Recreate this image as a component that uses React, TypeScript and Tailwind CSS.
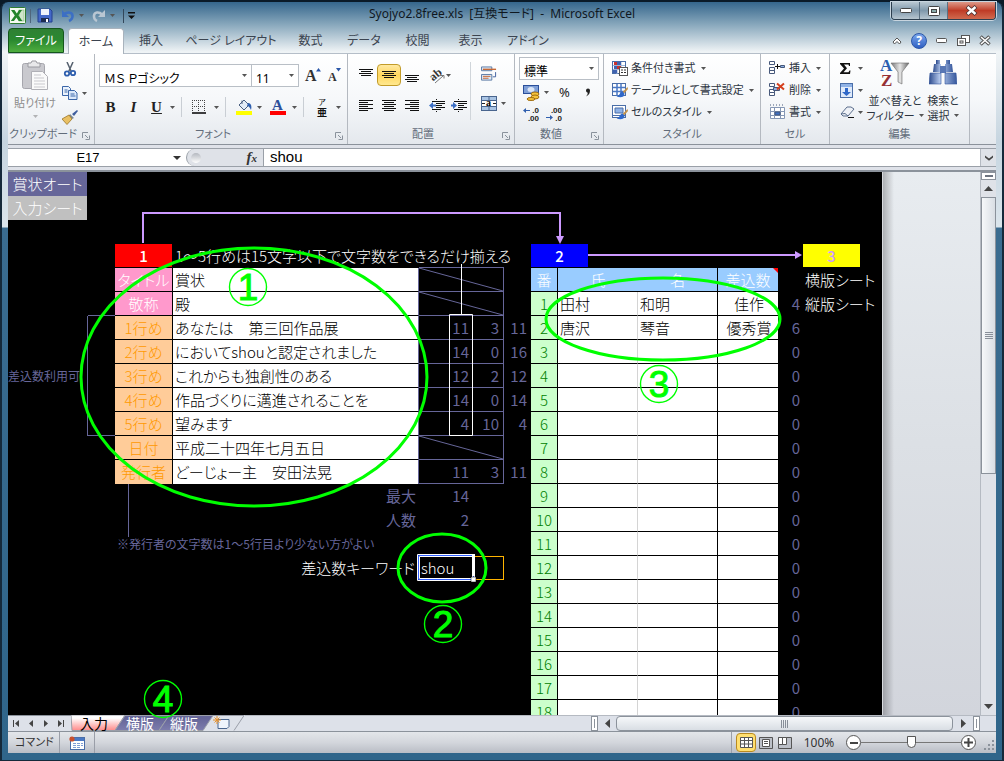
import type { ReactNode } from 'react'
import clsx from 'clsx'

/* ---------- small shared parts ---------- */

function Caret({ className }: { className?: string }) {
  return (
    <svg width="5" height="3" viewBox="0 0 5 3" className={clsx('shrink-0', className)} aria-hidden="true">
      <path d="M0 0h5L2.5 3z" fill="#555" />
    </svg>
  )
}

function IconButton({ label, className, children }: { label: string; className?: string; children: ReactNode }) {
  return (
    <button type="button" aria-label={label} className={clsx('flex shrink-0 items-center justify-center', className)}>
      {children}
    </button>
  )
}

function Group({ label, className, launcher, children }: { label: string; className: string; launcher?: boolean; children: ReactNode }) {
  return (
    <section aria-label={label} className={clsx('relative flex shrink-0 flex-col border-r border-[#b4b9c0]', className)}>
      <div className="h-[72px]">{children}</div>
      <h2 className={clsx('text-center text-[11px] leading-4 whitespace-nowrap text-[#626c7a]', launcher && 'pr-4')}>{label}</h2>
      {launcher && (
        <button type="button" aria-label={`${label}の設定`} className="absolute right-1 bottom-1">
          <svg width="8" height="8" viewBox="0 0 8 8" fill="none" stroke="#8a929c">
            <path d="M.5 6V.5H6M3 3l3 3M7.500 3.500v4h-4" />
          </svg>
        </button>
      )}
    </section>
  )
}

function Lines({ widths, className }: { widths: number[]; className?: string }) {
  const right = className === 'right'
  const center = className === 'center'
  return (
    <svg width="14" height={widths.length * 2} viewBox={`0 0 14 ${widths.length * 2}`} aria-hidden="true">
      {widths.map((w, i) => (
        <rect key={i} x={right ? 14 - w : center ? (14 - w) / 2 : 0} y={i * 2} width={w} height="1" fill="#111" />
      ))}
    </svg>
  )
}

/* ---------- title bar ---------- */

function TitleBar() {
  return (
    <header className="flex h-[26px] shrink-0 items-start">
      <div className="flex w-[300px] items-center pt-[5px] pl-px">
        <svg width="17" height="17" viewBox="0 0 17 17" aria-hidden="true">
          <rect x=".5" y=".5" width="16" height="16" rx="1" fill="#f4faf2" stroke="#2e7d32" />
          <rect x="10" y="3" width="5" height="11" fill="#cfe6cb" stroke="#7fb27a" strokeWidth=".6" />
          <path d="M2 3h3.500l2.300 3.400L10 3h3L9.500 8.300l3.800 5.700H9.700L7.400 10.500 5 14H1.800l4-5.600z" fill="#23842b" />
        </svg>
        <span className="mx-1 h-[14px] w-px bg-[#50667c]" />
        <IconButton label="上書き保存" className="ml-0.5">
          <svg width="16" height="15" viewBox="0 0 16 15">
            <path d="M1 1h12l2 2v11H1z" fill="#4368c8" stroke="#25418f" />
            <path d="M4 1h8v6H4z" fill="#eef3fb" />
            <path d="M4 10h8v4H4z" fill="#1b2b50" />
            <path d="M9 11h2v3H9z" fill="#fff" />
          </svg>
        </IconButton>
        <IconButton label="元に戻す" className="ml-2">
          <svg width="14" height="14" viewBox="0 0 14 14" fill="none">
            <path d="M3 5.500c3-3 8-2.500 8.500 1 .3 2.500-1.500 4.500-3.500 5.500" stroke="#3c6fc4" strokeWidth="2.600" />
            <path d="M1 1v7h7z" fill="#3c6fc4" />
          </svg>
        </IconButton>
        <Caret className="ml-1" />
        <IconButton label="やり直し" className="ml-2">
          <svg width="14" height="14" viewBox="0 0 14 14" fill="none">
            <path d="M10 5.500c-3-3-7.500-2.500-8 1C1.700 9 3 11 5 12" stroke="#b9c6d2" strokeWidth="2.600" />
            <path d="M13 1v7H6z" fill="#b9c6d2" />
          </svg>
        </IconButton>
        <Caret className="ml-1" />
        <span className="mx-1 ml-2 h-[14px] w-px bg-[#33475a]" />
        <IconButton label="クイック アクセス ツール バーのユーザー設定">
          <svg width="7" height="7" viewBox="0 0 7 7">
            <path d="M0 0h7v1.500H0zM0 3.500h7L3.500 7z" fill="#111" />
          </svg>
        </IconButton>
      </div>
      <h1 className="flex-1 pt-0.5 text-center text-xs leading-5 whitespace-pre text-[#10181f]">
        Syojyo2.8free.xls&nbsp; [互換モード]&nbsp; -&nbsp; Microsoft Excel
      </h1>
      <div className="flex w-[300px] justify-end">
        <div className="flex h-[18px] overflow-hidden rounded-b border border-t-0 border-[#2c3e4e] shadow-[0_0_0_1px_#c8d5df]">
          <IconButton label="最小化" className="w-7 border-r border-[#5b7183] bg-linear-to-b from-[#b9c8d2] via-[#7f98ab] to-[#b8c6d0]">
            <svg width="12" height="5" viewBox="0 0 12 5"><rect x=".5" y=".5" width="11" height="4" rx="1" fill="#fff" stroke="#444" /></svg>
          </IconButton>
          <IconButton label="元のサイズに戻す" className="w-7 border-r border-[#5b7183] bg-linear-to-b from-[#b9c8d2] via-[#7f98ab] to-[#b8c6d0]">
            <svg width="12" height="10" viewBox="0 0 12 10">
              <rect x=".5" y=".5" width="11" height="9" rx="1" fill="#fff" stroke="#444" />
              <rect x="3.500" y="3.500" width="5" height="3" fill="#8aa" stroke="#444" />
            </svg>
          </IconButton>
          <IconButton label="閉じる" className="w-[47px] bg-linear-to-b from-[#dd9888] via-[#bf3b26] to-[#d0694e]">
            <svg width="13" height="11" viewBox="0 0 13 11">
              <path d="M2 1.500l9 8M11 1.500l-9 8" stroke="#4a3030" strokeWidth="4" />
              <path d="M2.500 2l8 7M10.500 2l-8 7" stroke="#fff" strokeWidth="2.400" />
            </svg>
          </IconButton>
        </div>
      </div>
    </header>
  )
}

const menuTabs = [
  { name: '挿入', width: 'w-[54px]' },
  { name: 'ページ レイアウト', width: 'w-[106px]' },
  { name: '数式', width: 'w-[53px]' },
  { name: 'データ', width: 'w-[54px]' },
  { name: '校閲', width: 'w-[53px]' },
  { name: '表示', width: 'w-[53px]' },
  { name: 'アドイン', width: 'w-[62px]' },
]

function MenuTabs() {
  return (
    <nav className="flex h-[25px] shrink-0 items-stretch text-xs text-[#3b4450]">
      <button type="button" className="w-14 rounded-t border border-[#14571c] bg-linear-to-b from-[#2f8034] via-[#2a8a30] to-[#4fae3f] text-white">
        ファイル
      </button>
      <button type="button" className="z-10 -mb-px ml-1 w-14 rounded-t border border-b-0 border-[#a9b3bd] bg-white">
        ホーム
      </button>
      {menuTabs.map(tab => (
        <button key={tab.name} type="button" className={clsx('whitespace-nowrap', tab.width)}>{tab.name}</button>
      ))}
      <div className="flex flex-1 items-center justify-end">
        <IconButton label="リボンの最小化" className="w-[22px]">
          <svg width="10" height="8" viewBox="0 0 10 8"><path d="M5 1l4 4-1.500 2L5 4.500 2.500 7 1 5z" fill="#fff" stroke="#555" /></svg>
        </IconButton>
        <IconButton label="ヘルプ" className="w-[22px]">
          <span className="size-4 rounded-full border border-[#2b57a8] bg-linear-to-b from-[#7ba6ec] to-[#2f5fc2] text-xs leading-[14px] font-bold text-white">?</span>
        </IconButton>
        <IconButton label="ブックを最小化" className="w-[22px]">
          <svg width="11" height="5" viewBox="0 0 11 5"><rect x=".5" y=".5" width="10" height="4" rx="1" fill="#fff" stroke="#555" /></svg>
        </IconButton>
        <IconButton label="ブックを元のサイズに戻す" className="w-[22px]">
          <svg width="13" height="12" viewBox="0 0 13 12" fill="#fff" stroke="#555">
            <rect x="4.500" y=".5" width="8" height="7" />
            <rect x=".5" y="3.500" width="8" height="7" />
            <rect x="3" y="6" width="3" height="2" />
          </svg>
        </IconButton>
        <IconButton label="ブックを閉じる" className="w-[22px]">
          <svg width="12" height="11" viewBox="0 0 12 11">
            <path d="M1.500 1.500l9 8M10.500 1.500l-9 8" stroke="#555" strokeWidth="3.600" />
            <path d="M2 2l8 7M10 2L2 9" stroke="#fff" strokeWidth="1.600" />
          </svg>
        </IconButton>
      </div>
    </nav>
  )
}

/* ---------- ribbon ---------- */

function ClipboardGroup() {
  return (
    <Group label="クリップボード" className="w-[87px]" launcher>
      <div className="flex pt-1.5 pl-1.5">
        <button type="button" className="flex w-[42px] flex-col items-center text-[11px] leading-4 whitespace-nowrap text-[#8d8d8d]">
          <svg width="28" height="31" viewBox="0 0 28 31" aria-hidden="true">
            <rect x="1.500" y="3.500" width="22" height="25" rx="2" fill="#c9c9ce" stroke="#a6a6ad" />
            <path d="M7 3h3l1-2h4l1 2h3v4H7z" fill="#e8e8ea" stroke="#9a9aa0" />
            <path d="M10.500 11.500h11l5 5v13h-16z" fill="#fafafa" stroke="#b0b0b6" />
            <path d="M13 15h7M13 18h10M13 21h11M13 24h11M13 27h11" stroke="#c9c9ce" />
          </svg>
          <span className="mt-1">貼り付け</span>
          <Caret className="mt-1 opacity-40" />
        </button>
        <div className="flex flex-col gap-2 pt-px pl-1.5">
          <IconButton label="切り取り" className="size-4">
            <svg width="14" height="15" viewBox="0 0 14 15" fill="none">
              <path d="M4 0l4.500 10M10 0L5.500 10" stroke="#55606e" strokeWidth="1.500" />
              <circle cx="4" cy="11.500" r="2.200" stroke="#2f5fae" strokeWidth="1.800" />
              <circle cx="10" cy="11" r="2.200" stroke="#2f5fae" strokeWidth="1.800" />
            </svg>
          </IconButton>
          <div className="flex items-center gap-1">
            <IconButton label="コピー" className="size-4">
              <svg width="16" height="14" viewBox="0 0 16 14" stroke="#3b66a8">
                <path d="M.5.5h6l2 2v7h-8z" fill="#eaf2fc" />
                <path d="M6.500 4.500h6l2.500 2.500v6.500H6.500z" fill="#dce9fa" />
                <path d="M8.500 8h4M8.500 10h5M2.500 4h3M2.500 6h3" />
              </svg>
            </IconButton>
            <Caret />
          </div>
          <IconButton label="書式のコピー/貼り付け" className="size-4">
            <svg width="16" height="15" viewBox="0 0 16 15">
              <path d="M15 0l-5 4 2 2 4-5z" fill="#3f5e9e" />
              <path d="M8 4l4 4-2 1-3-3z" fill="#7b8794" />
              <path d="M7 5L0 9l5 5.500L10 9z" fill="#e9c063" stroke="#9a7526" strokeWidth=".8" />
            </svg>
          </IconButton>
        </div>
      </div>
    </Group>
  )
}

function Divider() {
  return <span className="mx-1.5 h-5 w-px shrink-0 bg-[#c9ced4]" />
}

function RibbonSelect({ label, value, className }: { label: string; value: string; className: string }) {
  return (
    <div className={clsx('relative h-[23px] border border-[#b9bfc6] bg-white', className)}>
      <select aria-label={label} className="h-full w-full appearance-none bg-transparent pb-1 pl-1 text-xs leading-4 text-black">
        <option>{value}</option>
      </select>
      <Caret className="pointer-events-none absolute top-[9px] right-1" />
    </div>
  )
}

function FontGroup() {
  return (
    <Group label="フォント" className="w-[253px]" launcher>
      <div className="flex items-center pt-2.5 pl-1">
        <RibbonSelect label="フォント名" value="ＭＳ Ｐゴシック" className="w-[153px]" />
        <RibbonSelect label="フォント サイズ" value="11" className="-ml-px w-12" />
        <IconButton label="フォント サイズの拡大" className="ml-1 h-5 w-5">
          <svg width="16" height="15" viewBox="0 0 16 15" className="overflow-visible">
            <text x="0" y="13" fontSize="16" fontWeight="bold" className="font-['Liberation_Serif',serif]" fill="#333">A</text>
            <path d="M11 3.500h5L13.500 0z" fill="#2b57a8" />
          </svg>
        </IconButton>
        <IconButton label="フォント サイズの縮小" className="ml-0.5 h-5 w-5">
          <svg width="14" height="15" viewBox="0 0 14 15" className="overflow-visible">
            <text x="0" y="13" fontSize="12" fontWeight="bold" className="font-['Liberation_Serif',serif]" fill="#333">A</text>
            <path d="M8 0h5l-2.500 3.500z" fill="#2b57a8" />
          </svg>
        </IconButton>
      </div>
      <div className="flex items-center pt-2 pl-2 font-['Liberation_Serif',serif] text-[15px] text-[#222]">
        <button type="button" aria-label="太字" className="h-6 w-[15px] font-bold">B</button>
        <button type="button" aria-label="斜体" className="ml-2 h-6 w-[15px] font-bold italic">I</button>
        <button type="button" aria-label="下線" className="ml-2 h-6 w-[15px] font-bold underline">U</button>
        <Caret className="ml-1.5" />
        <Divider />
        <IconButton label="罫線" className="ml-1">
          <svg width="14" height="14" viewBox="0 0 14 14" stroke="#444">
            <path d="M.5 0v12M6.500 0v12M12.500 0v12M0 .5h13M0 6.500h13" strokeDasharray="1 1" />
            <path d="M0 13h14" stroke="#000" strokeWidth="1.500" />
          </svg>
        </IconButton>
        <Caret className="ml-2" />
        <Divider />
        <IconButton label="塗りつぶしの色" className="ml-1">
          <svg width="17" height="16" viewBox="0 0 17 16">
            <path d="M3 6l5-5 5 5-5 5z" fill="#e3ecf7" stroke="#4a5f80" />
            <path d="M6 5V1.500" stroke="#4a5f80" />
            <path d="M12 4c3 0 4 3 3 7-1-2-2-4-4-4z" fill="#2f5fae" />
            <rect x="0" y="12" width="16" height="4" fill="#ff0" />
          </svg>
        </IconButton>
        <Caret className="ml-1" />
        <IconButton label="フォントの色" className="ml-2">
          <svg width="16" height="16" viewBox="0 0 16 16" className="overflow-visible">
            <text x="2" y="11" fontSize="15" fontWeight="bold" className="font-['Liberation_Serif',serif]" fill="#2b4f9a">A</text>
            <rect x="0" y="12" width="16" height="4" fill="#f00" />
          </svg>
        </IconButton>
        <Caret className="ml-1.5" />
        <Divider />
        <button type="button" aria-label="ふりがなの表示/非表示" className="ml-1.5 flex w-3 flex-col items-center font-['Noto_Sans_CJK_JP',sans-serif] text-[#111]">
          <span className="text-[8px] leading-[9px]">ア</span>
          <span className="text-[10px] leading-[11px] font-bold">亜</span>
        </button>
        <Caret className="ml-2" />
      </div>
    </Group>
  )
}

function AlignGroup() {
  return (
    <Group label="配置" className="w-[167px]" launcher>
      <div className="flex h-full pl-1.5">
        <div className="flex w-[116px] flex-col pt-2.5">
          <div className="flex h-[22px] items-center">
            <IconButton label="上揃え" className="h-5 w-[23px] pb-1"><Lines widths={[14, 10, 14, 10]} className="center" /></IconButton>
            <IconButton label="上下中央揃え" className="h-[22px] w-6 rounded-sm border border-[#c29b29] bg-linear-to-b from-[#ffe9a0] via-[#ffd65c] to-[#ffe88e]">
              <Lines widths={[14, 10, 14, 10]} className="center" />
            </IconButton>
            <IconButton label="下揃え" className="h-5 w-[22px] pt-2"><Lines widths={[14, 10, 14, 10]} className="center" /></IconButton>
            <IconButton label="方向" className="ml-1.5">
              <svg width="17" height="16" viewBox="0 0 17 16" className="overflow-visible">
                <text x="1" y="12" fontSize="12" fontWeight="bold" transform="rotate(-40 6 9)" className="font-['Liberation_Serif',serif]" fill="#333">ab</text>
                <path d="M6 16l8-7M11 8.500h4v3" stroke="#777" fill="none" />
              </svg>
            </IconButton>
            <Caret />
          </div>
          <div className="flex h-10 items-center">
            <IconButton label="左揃え" className="h-5 w-[23px]"><Lines widths={[14, 9, 14, 9, 14, 9]} /></IconButton>
            <IconButton label="中央揃え" className="h-5 w-6"><Lines widths={[14, 10, 14, 10, 14, 10]} className="center" /></IconButton>
            <IconButton label="右揃え" className="h-5 w-[22px]"><Lines widths={[14, 9, 14, 9, 14, 9]} className="right" /></IconButton>
            <IconButton label="インデントを減らす" className="ml-1 h-5 w-5">
              <svg width="16" height="14" viewBox="0 0 16 14" stroke="#111">
                <path d="M3 2.500h13M8 4.500h8M8 6.500h5M8 8.500h8M3 10.500h9" />
                <path d="M7.500 0v14" strokeDasharray="1 1" />
                <path d="M0 6.500L4 3v2.500h3v2H4V10z" fill="#3c6fc4" stroke="none" />
              </svg>
            </IconButton>
            <IconButton label="インデントを増やす" className="ml-0.5 h-5 w-5">
              <svg width="16" height="14" viewBox="0 0 16 14" stroke="#111">
                <path d="M3 2.500h13M8 4.500h8M8 6.500h5M8 8.500h8M3 10.500h9" />
                <path d="M7.500 0v14" strokeDasharray="1 1" />
                <path d="M6 6.500L2 3v2.500H0v2h2V10z" fill="#3c6fc4" stroke="none" />
              </svg>
            </IconButton>
          </div>
        </div>
        <span className="mt-2 h-[58px] w-px bg-[#d0d5da]" />
        <div className="flex flex-col gap-3.5 pt-3 pl-2.5">
          <IconButton label="折り返して全体を表示する" className="w-4">
            <svg width="17" height="16" viewBox="0 0 17 16" fill="none">
              <path d="M.5.500h11v4H.5zM.5 8.500h11v6H.5z" fill="#dfe9f5" stroke="#5877a3" />
              <path d="M2 3h14" stroke="#c5622d" strokeWidth="1.400" />
              <path d="M2 10.500h8M2 12.500h6" stroke="#c5622d" />
              <path d="M15.500 6v5h-3" stroke="#3f5e9e" />
            </svg>
          </IconButton>
          <div className="flex items-center gap-1">
            <IconButton label="セルを結合して中央揃え">
              <svg width="16" height="15" viewBox="0 0 16 15" className="overflow-visible">
                <rect x=".5" y=".5" width="15" height="14" fill="#a9c4e4" stroke="#49658e" />
                <path d="M0 4.500h16M0 10.500h16M8 0v4M8 11v4" stroke="#49658e" />
                <rect x="1" y="5" width="14" height="5" fill="#fff" />
                <text x="5" y="10" fontSize="10" fontWeight="bold" className="font-['Liberation_Serif',serif]">a</text>
                <path d="M1 7.500h3M12 7.500h3" stroke="#222" />
              </svg>
            </IconButton>
            <Caret />
          </div>
        </div>
      </div>
    </Group>
  )
}

function DecimalIcon({ top, bottom, right }: { top: string; bottom: string; right?: boolean }) {
  return (
    <svg width="17" height="14" viewBox="0 0 17 14" className="overflow-visible" aria-hidden="true">
      <text x="16" y="6" textAnchor="end" fontSize="8" fontWeight="bold" className="font-['Liberation_Sans',sans-serif]" fill="#222">{top}</text>
      <text x="16" y="14" textAnchor="end" fontSize="8" fontWeight="bold" className="font-['Liberation_Sans',sans-serif]" fill="#222">{bottom}</text>
      <path d={right ? 'M7 10.500L4 8v2H0v1h4v2z' : 'M0 3.500L3 1v2h4v1H3v2z'} fill="#2f5fae" />
    </svg>
  )
}

function NumberGroup() {
  return (
    <Group label="数値" className="w-[89px]" launcher>
      <div className="pt-[3px] pl-1">
        <RibbonSelect label="表示形式" value="標準" className="w-20" />
        <div className="flex h-[25px] items-center pl-1">
          <IconButton label="通貨表示形式">
            <svg width="17" height="16" viewBox="0 0 17 16">
              <rect x=".5" y=".5" width="15" height="8" fill="#7f9fd6" stroke="#2b4f9a" />
              <ellipse cx="8" cy="4.500" rx="3.500" ry="2.500" fill="#dbe6f7" />
              <ellipse cx="12" cy="9" rx="4" ry="2" fill="#f5c33b" stroke="#a06d12" />
              <ellipse cx="12" cy="12" rx="4" ry="2" fill="#f5c33b" stroke="#a06d12" />
              <ellipse cx="8" cy="14" rx="4" ry="1.500" fill="#f5c33b" stroke="#a06d12" />
            </svg>
          </IconButton>
          <Caret className="ml-1" />
          <button type="button" aria-label="パーセント スタイル" className="ml-2.5 text-[13px] text-[#222]">%</button>
          <IconButton label="桁区切りスタイル" className="ml-3.5 w-2">
            <svg width="6" height="9" viewBox="0 0 6 9"><path d="M1 2.500a2 2 0 1 1 4 0C5 5 4 7 1 8.500 2.500 6.500 3 5.500 2.500 4.500 1.500 4.300 1 3.500 1 2.500z" fill="#222" /></svg>
          </IconButton>
        </div>
        <div className="flex items-center gap-1.5 pt-0.5 pl-1">
          <IconButton label="小数点以下の表示桁数を増やす"><DecimalIcon top=".0" bottom=".00" /></IconButton>
          <IconButton label="小数点以下の表示桁数を減らす"><DecimalIcon top=".00" bottom=".0" right /></IconButton>
        </div>
      </div>
    </Group>
  )
}

function StyleIcon({ kind }: { kind: 'condition' | 'table' | 'cell' }) {
  return (
    <svg width="16" height="16" viewBox="0 0 16 16" className="shrink-0" aria-hidden="true">
      <rect x=".5" y="1.500" width="13" height="12" fill="#fff" stroke="#4a6ea8" />
      {kind === 'condition' && (
        <>
          <path d="M5 2v12M9 2v12M1 5.500h12M1 9.500h12" stroke="#9db4d6" />
          <path d="M2 2h3v3H2zM5 6h4v3H5z" fill="#c9302c" />
          <path d="M2 6h3v3H2zM5 2h4v3H5zM1 10h4v3H1z" fill="#3f62b0" />
          <rect x="7.500" y="7.500" width="8" height="8" fill="#fff" stroke="#555" />
          <path d="M9 10h2M12 10h2M9 12.500h2M12 12.500h2" stroke="#333" />
        </>
      )}
      {kind === 'table' && <path d="M5 2v12M9 2v12M1 5.500h12M1 9.500h12" stroke="#4a78c4" strokeWidth="1.500" />}
      {kind === 'cell' && <path d="M3 4h8v5H3zM1 11.500h12" fill="#8fb2e6" stroke="#4a6ea8" />}
      {kind !== 'condition' && (
        <>
          <path d="M15.500 5l-5 5 1.500 1.500L16 7z" fill="#c2924a" />
          <path d="M10.500 9.500c-3 .5-2 4-6 5 4 1.500 8 1 8-3z" fill="#2f68c9" />
        </>
      )}
    </svg>
  )
}

function CellIcon({ kind }: { kind: 'insert' | 'delete' | 'format' }) {
  return (
    <svg width="17" height="16" viewBox="0 0 17 16" fill="#fff" stroke="#46587a" className="shrink-0" aria-hidden="true">
      {kind !== 'format' && <path d="M.5 1.500h5v3h-5zM.5 7.500h5v3h-5zM.5 10.500h5v3h-5z" />}
      {kind === 'insert' && (
        <>
          <path d="M6 6.500h5M8.500 4v5" stroke="#111" />
          <path d="M11.500 5.500h4v2h-4z" fill="#8fb2e6" />
        </>
      )}
      {kind === 'delete' && (
        <>
          <path d="M4.500 5.500h6v3h-6z" fill="#8fb2e6" />
          <path d="M8 1.500l7 6M15 1.500l-7 6" stroke="#d5401f" strokeWidth="2" />
        </>
      )}
      {kind === 'format' && (
        <>
          <path d="M1.500 3.500h14v11h-14zM1.500 7.500h14M1.500 11.500h14M5.500 3.500v11M11.500 3.500v11" stroke="#8597b5" />
          <path d="M6 8h5v3H6z" fill="#3c6fc4" />
          <path d="M1 1h15" strokeDasharray="1 2" />
        </>
      )}
    </svg>
  )
}

function TextCommand({ icon, label }: { icon: ReactNode; label: string }) {
  return (
    <button type="button" className="flex h-[22px] items-center gap-[3px] text-[11px] whitespace-nowrap text-[#2c3440]">
      {icon}
      <span>{label}</span>
      <Caret className="ml-0.5" />
    </button>
  )
}

function EditGroup() {
  return (
    <Group label="編集" className="w-[140px]">
      <div className="flex pt-[3px] pl-2.5">
        <div className="flex w-7 flex-col">
          <button type="button" aria-label="オート SUM" className="flex h-[22px] items-center gap-1.5">
            <svg width="11" height="11" viewBox="0 0 11 11"><path d="M0 0h10v3H9L8.500 1.500H4L7 5.300 3.500 9.300h5L9.500 7.500H10.500L10 11H0V10L4 5.600 0 1z" fill="#111" /></svg>
            <Caret className="ml-px" />
          </button>
          <button type="button" aria-label="フィル" className="flex h-[22px] items-center gap-[5px]">
            <svg width="13" height="15" viewBox="0 0 13 15">
              <rect x=".5" y=".5" width="12" height="14" fill="#dfeafa" stroke="#4a6ea8" />
              <path d="M1 1h11v3H1z" fill="#8fb2e6" />
              <path d="M5 5h3v4h3l-4.500 4L2 9h3z" fill="#2f68c9" />
            </svg>
            <Caret />
          </button>
          <button type="button" aria-label="クリア" className="flex h-[22px] items-center gap-[3px]">
            <svg width="15" height="12" viewBox="0 0 15 12">
              <path d="M1 8l6-7h4l3 2-6 7H3z" fill="#eef1f6" stroke="#5c6f8d" />
              <path d="M1 8l4-.5 3 2.500" fill="none" stroke="#5c6f8d" />
              <path d="M8 11.500h6" stroke="#111" />
            </svg>
            <Caret />
          </button>
        </div>
        <button type="button" className="flex w-[54px] flex-col items-center text-[11px] leading-[15px] whitespace-nowrap text-[#2c3440]">
          <svg width="30" height="32" viewBox="0 0 30 32" className="overflow-visible" aria-hidden="true">
            <defs>
              <linearGradient id="funnel" x1="0" x2="1">
                <stop offset="0" stopColor="#777" />
                <stop offset=".5" stopColor="#e6e6e6" />
                <stop offset="1" stopColor="#666" />
              </linearGradient>
            </defs>
            <text x="0" y="14" fontSize="17" fontWeight="bold" className="font-['Liberation_Serif',serif]" fill="#2b5fb0">A</text>
            <text x="1" y="29" fontSize="17" fontWeight="bold" className="font-['Liberation_Serif',serif]" fill="#963034">Z</text>
            <path d="M11 6h18l-7 9v12l-4-2V15z" fill="url(#funnel)" stroke="#6b6b6b" strokeWidth=".6" />
          </svg>
          <span className="mt-1">並べ替えと</span>
          <span className="flex items-center gap-1">フィルター<Caret /></span>
        </button>
        <button type="button" className="flex w-[42px] flex-col items-center text-[11px] leading-[15px] whitespace-nowrap text-[#2c3440]">
          <svg width="28" height="32" viewBox="0 0 28 32" aria-hidden="true">
            <defs>
              <linearGradient id="lens" x1="0" x2="1">
                <stop offset="0" stopColor="#2c4a8c" />
                <stop offset=".4" stopColor="#b9cdf0" />
                <stop offset="1" stopColor="#34569c" />
              </linearGradient>
            </defs>
            <path d="M7 3h4v4H7zM17 3h4v4h-4z" fill="url(#lens)" />
            <path d="M5 7h7v8H4zM16 7h7l1 8h-8z" fill="url(#lens)" />
            <path d="M11 9h6v7h-6z" fill="#5877b5" />
            <path d="M1 16h11v11H0zM16 16h11l1 11H16z" fill="url(#lens)" stroke="#34569c" strokeWidth=".6" />
          </svg>
          <span className="mt-1">検索と</span>
          <span className="flex items-center gap-1">選択<Caret /></span>
        </button>
      </div>
    </Group>
  )
}

function Ribbon() {
  return (
    <div className="flex h-[92px] shrink-0 border-t border-b border-t-[#b5bec8] border-b-[#8b929b] bg-linear-to-b from-white via-[#f6f8fa] to-[#e4e8ed]">
      <ClipboardGroup />
      <FontGroup />
      <AlignGroup />
      <NumberGroup />
      <Group label="スタイル" className="w-[157px]">
        <div className="pt-[3px] pl-2">
          <TextCommand icon={<StyleIcon kind="condition" />} label="条件付き書式" />
          <TextCommand icon={<StyleIcon kind="table" />} label="テーブルとして書式設定" />
          <TextCommand icon={<StyleIcon kind="cell" />} label="セルのスタイル" />
        </div>
      </Group>
      <Group label="セル" className="w-[69px]">
        <div className="pt-[3px] pl-2">
          <TextCommand icon={<CellIcon kind="insert" />} label="挿入" />
          <TextCommand icon={<CellIcon kind="delete" />} label="削除" />
          <TextCommand icon={<CellIcon kind="format" />} label="書式" />
        </div>
      </Group>
      <EditGroup />
    </div>
  )
}

function FormulaBar() {
  return (
    <div className="flex h-[27px] shrink-0 border-b-2 border-[#8b929b] bg-[#dfe2e9] pt-[3px] pb-[3px]">
      <div className="flex w-full border-y border-[#9aa0a8] bg-white">
        <input aria-label="名前ボックス" defaultValue="E17" className="w-[160px] bg-white text-center font-['Liberation_Sans',sans-serif] text-[13px] text-black outline-none" />
        <button type="button" aria-label="名前の一覧" className="flex w-[18px] items-center justify-center">
          <svg width="8" height="4" viewBox="0 0 8 4"><path d="M0 0h8L4 4z" fill="#333" /></svg>
        </button>
        <div className="flex w-[77px] items-center justify-between rounded-l-full border-l border-[#9aa0a8] bg-[#dfe2e8] pr-1.5 pl-1">
          <span className="size-2.5 rounded-full bg-linear-to-b from-[#b4b8bf] to-white" />
          <button type="button" aria-label="関数の挿入" className="font-['Liberation_Serif',serif] text-[15px] leading-4 font-bold text-[#333] italic">
            f<span className="text-[11px]">x</span>
          </button>
        </div>
        <input aria-label="数式バー" defaultValue="shou" className="min-w-0 flex-1 border-l border-[#9aa0a8] bg-white pl-1.5 font-['Liberation_Sans',sans-serif] text-[15px] text-black outline-none" />
        <IconButton label="数式バーの展開" className="w-4 border-l border-[#b5bac2] bg-[#dfe2e8]">
          <svg width="8" height="6" viewBox="0 0 8 6"><path d="M0 .5l4 3 4-3v2L4 5.700 0 2.500z" fill="#444" /></svg>
        </IconButton>
      </div>
    </div>
  )
}

/* ---------- worksheet ---------- */

const columnWidths = [
  'w-20', 'w-[27px]', 'w-[58px]', 'w-[246px]', 'w-14', 'w-[29px]', 'w-[27px]',
  'w-[27px]', 'w-20', 'w-20', 'w-[60px]', 'w-[25px]', 'w-[58px]', 'w-[21px]',
]

interface LetterRow {
  label: string
  value: string
  counts?: [number, number, number]
}

const letterRows: LetterRow[] = [
  { label: 'タイトル', value: '賞状' },
  { label: '敬称', value: '殿' },
  { label: '1行め', value: 'あなたは　第三回作品展', counts: [11, 3, 11] },
  { label: '2行め', value: 'においてshouと認定されました', counts: [14, 0, 16] },
  { label: '3行め', value: 'これからも独創性のある', counts: [12, 2, 12] },
  { label: '4行め', value: '作品づくりに邁進されることを', counts: [14, 0, 14] },
  { label: '5行め', value: '望みます', counts: [4, 10, 4] },
  { label: '日付', value: '平成二十四年七月五日' },
  { label: '発行者', value: 'どーじょー主　安田法晃', counts: [11, 3, 11] },
]

const people = [
  { family: '田村', given: '和明', prize: '佳作', length: 4 },
  { family: '唐沢', given: '琴音', prize: '優秀賞', length: 6 },
]

const FIRST_ROW = 4
const ROW_COUNT = 23

function LetterCells({ row }: { row: number }) {
  const entry = letterRows[row - FIRST_ROW]
  const index = row - FIRST_ROW
  const last = index === letterRows.length - 1

  if (entry) {
    const grid = 'border-b border-[#666699] pr-1 text-right font-normal text-[#666699]'
    return (
      <>
        <td className={clsx((index === 1 || index === 6) && 'border-b border-[#666699]')} />
        <th
          scope="row"
          className={clsx(
            'border-r border-black text-center',
            !last && 'border-b',
            index < 2 ? 'bg-[#ff99cc] text-white' : 'bg-[#ffcc99] text-[#ff9900]',
          )}
        >
          {entry.label}
        </th>
        <td className={clsx('border-r border-r-[#666699] border-b-black bg-white pl-0.5 text-black', !last && 'border-b')}>{entry.value}</td>
        {entry.counts ? (
          <>
            <td className={clsx(grid, 'pr-1.5')}>{entry.counts[0]}</td>
            <td className={clsx(grid, 'border-r')}>{entry.counts[1]}</td>
            <td className="pr-1 text-right font-normal text-[#666699]">{entry.counts[2]}</td>
          </>
        ) : (
          <>
            <td colSpan={2} className="border-r border-b border-[#666699]">
              <svg viewBox="0 0 84 23" className="block h-[23px] w-full" aria-hidden="true">
                <path d="M0 0l84 23" stroke="#666699" />
              </svg>
            </td>
            <td />
          </>
        )}
      </>
    )
  }
  if (row === 3) {
    return (
      <>
        <td />
        <td className="border-r border-b border-black bg-[#ff0000] text-center font-medium text-white">1</td>
        <td className="pl-0.5 text-white">1～5行めは15文字以下で文字数をできるだけ揃える</td>
        <td colSpan={2} className="border-b border-[#666699]" />
        <td />
      </>
    )
  }
  if (row === 13 || row === 14) {
    return (
      <>
        <td /><td />
        <td className="pr-[3px] text-right font-normal text-[#666699]">{row === 13 ? '最大' : '人数'}</td>
        <td className="pr-1.5 text-right font-normal text-[#666699]">{row === 13 ? 14 : 2}</td>
        <td /><td />
      </>
    )
  }
  if (row === 15) {
    return (
      <>
        <td />
        <td colSpan={5} className="pl-0.5 text-xs leading-[23px] font-normal text-[#666699]">※発行者の文字数は1～5行目より少ない方がよい</td>
      </>
    )
  }
  if (row === 16) {
    return (
      <>
        <td /><td />
        <td className="pr-1 text-right text-white">差込数キーワード</td>
        <td className="pl-0.5 text-white">shou</td>
        <td className="border-t border-r border-b border-[#ffb400]" />
        <td />
      </>
    )
  }
  return <td colSpan={6} />
}

function NameCells({ row }: { row: number }) {
  if (row < 3) return <td colSpan={7} />
  if (row === 3) {
    return (
      <>
        <td colSpan={5}>
          <div className="h-[23px] w-[57px] bg-[#0000ff] text-center font-medium text-white">2</div>
        </td>
        <td className="border-r border-b border-black bg-[#ffff00] text-center font-medium text-[#cc99ff]">3</td>
        <td />
      </>
    )
  }
  if (row === 4) {
    const head = 'border-b border-black bg-[#99ccff] text-center text-white'
    return (
      <>
        <th className={clsx(head, 'border-r')}>番</th>
        <th className={head}>氏</th>
        <th className={clsx(head, 'border-r')}>名</th>
        <th className={clsx(head, 'relative')}>
          差込数
          <span className="absolute top-0 right-0 size-[5px] bg-[#ff0000] [clip-path:polygon(0_0,100%_0,100%_100%)]" />
        </th>
        <td />
        <td colSpan={2} className="pl-0.5 text-white">横版シート</td>
      </>
    )
  }
  const number = row - FIRST_ROW
  const person = people[number - 1]
  const cell = 'border-b border-b-black bg-white pl-0.5 text-black'
  return (
    <>
      <th scope="row" className="border-r border-b border-black bg-[#ccffcc] text-center text-[#008000]">{number}</th>
      <td className={clsx(cell, 'border-r border-r-[#d4d4d4]')}>{person?.family}</td>
      <td className={clsx(cell, 'border-r border-r-black')}>{person?.given}</td>
      <td className={clsx(cell, 'text-center')}>{person?.prize}</td>
      <td className="pr-[3px] text-right font-normal text-[#666699]">{person?.length ?? 0}</td>
      <td colSpan={2} className="pl-0.5 text-white">{number === 1 && '縦版シート'}</td>
    </>
  )
}

function SheetTable() {
  return (
    <table className="w-[874px] table-fixed border-separate border-spacing-0 bg-black text-[15px] leading-[23px] font-light whitespace-nowrap [&_td]:h-6 [&_td]:py-0 [&_td]:align-top [&_th]:h-6 [&_th]:p-0 [&_th]:align-top [&_th]:font-light">
      <colgroup>
        {columnWidths.map((width, i) => <col key={i} className={width} />)}
      </colgroup>
      <tbody>
        {Array.from({ length: ROW_COUNT }, (_, row) => (
          <tr key={row}>
            <td
              className={clsx(
                row === 0 && 'border-r border-black bg-[#666699] text-center text-white',
                row === 1 && 'border-r border-black bg-[#c0c0c0] text-center text-white',
                row >= 6 && row <= 10 && 'border-r border-[#666699]',
                row === 8 && 'text-xs leading-[23px] font-normal text-[#666699]',
              )}
            >
              {row === 0 && '賞状オート'}
              {row === 1 && '入力シート'}
              {row === 8 && '差込数利用可'}
            </td>
            <LetterCells row={row} />
            <NameCells row={row} />
          </tr>
        ))}
      </tbody>
    </table>
  )
}

const badges = [
  { n: 1, x: 248, y: 287 },
  { n: 2, x: 443, y: 624 },
  { n: 3, x: 659, y: 384 },
  { n: 4, x: 163, y: 699 },
]

/* arrows, rings and numbers drawn over the cells */
function Annotations() {
  return (
    <svg
      width="874"
      height="544"
      viewBox="8 172 874 544"
      fill="none"
      className="pointer-events-none absolute top-0 left-0 z-10 overflow-visible"
      aria-hidden="true"
    >
      <g stroke="#cc99ff" strokeWidth="2">
        <path d="M143 243v-30h417v24" />
        <path d="M588 255h208" />
      </g>
      <path d="M556 236h8l-4 8zM795 251v8l7-4z" fill="#cc99ff" />
      <path d="M461.500 264v50M449.500 314.500h23v121h-23z" stroke="#fff" />
      <path d="M128.500 484v53" stroke="#666699" />
      <path d="M417.500 554.500h57v26h-57z" stroke="#fff" />
      <path d="M418.500 555.500h55v24h-55z" stroke="#2f5fff" />
      <path d="M419.500 556.500h53v22h-53z" stroke="#fff" />
      <path d="M473.500 554v22" stroke="#fff" strokeWidth="3" />
      <path d="M471 577h5v5h-5z" fill="#fff" stroke="#000" strokeWidth=".5" />
      <g stroke="#00ff00" strokeWidth="3">
        <ellipse cx="254" cy="377" rx="173" ry="129" />
        <ellipse cx="442" cy="568" rx="44" ry="34" />
        <ellipse cx="663" cy="319" rx="117" ry="41" />
      </g>
      {badges.map(({ n, x, y }) => (
        <g key={n}>
          <circle cx={x} cy={y} r="18.500" stroke="#00ff00" strokeWidth="1.400" />
          <text x={x} y={y + 13} textAnchor="middle" fontSize="37" fill="#00ff00" stroke="#00ff00" className="font-['Liberation_Sans',sans-serif]">{n}</text>
        </g>
      ))}
    </svg>
  )
}

function VerticalScroll() {
  return (
    <div className="flex w-4 shrink-0 flex-col items-center border-l border-[#b5bac2] bg-[#dfe2e8]">
      <div className="flex h-2 w-full items-center justify-center border border-[#8b929b] bg-white">
        <span className="h-0.5 w-2 bg-[#6d7480]" />
      </div>
      <IconButton label="上へスクロール" className="h-[17px] w-full">
        <svg width="9" height="5" viewBox="0 0 9 5"><path d="M0 5h9L4.500 0z" fill="#444" /></svg>
      </IconButton>
      <div className="flex h-[277px] w-full flex-col items-center justify-center gap-px border border-[#8b929b] bg-linear-to-r from-[#f6f8fa] to-[#d9dee4]">
        {[0, 1, 2, 3].map(i => <span key={i} className="h-px w-2 bg-[#888f99]" />)}
      </div>
      <div className="flex-1" />
      <IconButton label="下へスクロール" className="h-[17px] w-full">
        <svg width="9" height="5" viewBox="0 0 9 5"><path d="M0 0h9L4.500 5z" fill="#444" /></svg>
      </IconButton>
    </div>
  )
}

function Worksheet() {
  return (
    <main className="relative flex min-h-0 flex-1">
      <div className="min-h-0 shrink-0 overflow-hidden font-['Noto_Sans_CJK_JP',sans-serif]">
        <SheetTable />
      </div>
      <div className="flex-1 bg-linear-to-b from-[#e8ecf0] via-[#dce0e5] to-[#d2d5dc]">
        <div className="h-full w-3 border-l border-[#d8dade] bg-linear-to-r from-black/25 to-transparent" />
      </div>
      <VerticalScroll />
      <Annotations />
    </main>
  )
}

/* ---------- bottom bars ---------- */

const sheetTabs = [
  { name: '入力', active: true },
  { name: '横版', active: false },
  { name: '縦版', active: false },
]

const navPaths = [
  { label: '最初のシート', d: 'M1 0h1v7H1zM7 0v7L3 3.500z' },
  { label: '前のシート', d: 'M6 0v7L2 3.500z' },
  { label: '次のシート', d: 'M2 0v7l4-3.500z' },
  { label: '最後のシート', d: 'M1 0v7l4-3.500zM6 0h1v7H6z' },
]

function SheetTabs() {
  return (
    <div className="flex h-4 shrink-0 bg-[#dde1e9]">
      <div className="flex w-[63px] items-center gap-[7px] border-t border-[#8b929b] pl-1">
        {navPaths.map(nav => (
          <IconButton key={nav.label} label={nav.label}>
            <svg width="8" height="7" viewBox="0 0 8 7"><path d={nav.d} fill="#444" /></svg>
          </IconButton>
        ))}
      </div>
      {sheetTabs.map((tab, i) => (
        <button
          key={tab.name}
          type="button"
          className={clsx(
            "relative h-4 w-[54px] font-['Noto_Sans_CJK_JP',sans-serif] text-[14px] leading-[14px]",
            tab.active ? 'pr-2 text-black' : '-ml-2.5 pr-1 text-white',
          )}
        >
          <svg viewBox="0 0 54 16" preserveAspectRatio="none" className="absolute inset-0 h-full w-full" aria-hidden="true">
            <defs>
              <linearGradient id={`tab${i}`} x1="0" x2="0" y1="0" y2="1">
                <stop offset=".2" stopColor={tab.active ? '#fff' : '#666699'} />
                <stop offset="1" stopColor={tab.active ? '#ff8a8a' : '#7d7dad'} />
              </linearGradient>
            </defs>
            <path d={tab.active ? 'M0 0h54L44 15.500H1z' : 'M10 .500h44L44 15.500H0z'} fill={`url(#tab${i})`} stroke="#9a9ea8" />
          </svg>
          <span className="relative">{tab.name}</span>
        </button>
      ))}
      <IconButton label="ワークシートの挿入" className="-ml-2 h-4 w-10">
        <svg width="40" height="16" viewBox="0 0 40 16">
          <path d="M8 .500h31L29 15.500" fill="none" stroke="#9a9ea8" />
          <path d="M13 4.500h11v7l-2 2h-9z" fill="#eef4fc" stroke="#49658e" />
          <path d="M12 1v8M8 5h8M9.500 2.500l5 5M14.500 2.500l-5 5" stroke="#e8912b" />
        </svg>
      </IconButton>
      <div className="flex-1 border-t border-[#b5bac2]" />
      <div className="flex w-[405px] items-stretch border-t border-[#b5bac2]">
        <span className="w-[7px] border border-[#8b929b] bg-white p-0.5"><span className="block h-full w-px bg-[#8b929b]" /></span>
        <IconButton label="左へスクロール" className="w-[18px]">
          <svg width="5" height="9" viewBox="0 0 5 9"><path d="M5 0v9L0 4.500z" fill="#444" /></svg>
        </IconButton>
        <div className="flex flex-1 items-center justify-center gap-px rounded-sm border border-[#8b929b] bg-linear-to-b from-[#f6f8fa] to-[#d9dee4]">
          {[0, 1, 2, 3].map(i => <span key={i} className="h-2 w-px bg-[#888f99]" />)}
        </div>
        <IconButton label="右へスクロール" className="w-5">
          <svg width="5" height="9" viewBox="0 0 5 9"><path d="M0 0v9l5-4.500z" fill="#444" /></svg>
        </IconButton>
        <span className="w-[7px] border border-[#8b929b] bg-white p-0.5"><span className="block h-full w-px bg-[#8b929b]" /></span>
        <span className="w-4" />
      </div>
    </div>
  )
}

function StatusBar() {
  return (
    <footer className="flex h-[22px] shrink-0 items-center border-t border-[#8b929b] bg-linear-to-b from-[#e3e6ea] via-[#d3d6dc] to-[#b9bdc5] text-[11px] text-[#333]">
      <span className="w-[51px] pl-[7px]">コマンド</span>
      <span className="h-full w-px bg-[#9a9ea8]" />
      <IconButton label="マクロの記録" className="w-[34px]">
        <svg width="16" height="14" viewBox="0 0 16 14">
          <rect x="1.500" y="1.500" width="14" height="12" fill="#fff" stroke="#4a6ea8" />
          <path d="M2 2h13v3H2z" fill="#4a78c4" />
          <path d="M4 7.500h3M8 7.500h3M12 7.500h2M4 9.500h3M8 9.500h3M12 9.500h2M4 11.500h3M8 11.500h3" stroke="#7f9fd6" />
          <circle cx="3" cy="3" r="2.600" fill="#c8502e" />
        </svg>
      </IconButton>
      <span className="h-full w-px bg-[#9a9ea8]" />
      <div className="flex-1" />
      <span className="h-full w-px bg-[#9a9ea8]" />
      <IconButton label="標準" className="ml-1 h-[19px] w-5 rounded-sm border border-[#b98a1f] bg-[#ffdf70]">
        <svg width="13" height="11" viewBox="0 0 13 11"><path d="M.5.500h12v10H.5zM.5 3.500h12M.5 7h12M4.500.500v10M8.500.500v10" fill="#fff" stroke="#555" /></svg>
      </IconButton>
      <IconButton label="ページ レイアウト" className="ml-0.5 w-[15px]">
        <svg width="14" height="12" viewBox="0 0 14 12" stroke="#555"><path d="M.5.500h13v11H.5z" fill="#bcc0c8" /><path d="M3.500 2.500h7v7h-7zM5 4.500h4M5 6.500h4" fill="#fff" /></svg>
      </IconButton>
      <IconButton label="改ページ プレビュー" className="ml-1 w-[15px]">
        <svg width="14" height="12" viewBox="0 0 14 12" stroke="#555"><path d="M.5.500h13v11H.5z" fill="#bcc0c8" /><path d="M.5.500h4v7h-4zM4.500.500h4v7h-4z" fill="#fff" /></svg>
      </IconButton>
      <button type="button" className="w-[54px] text-center text-xs">100%</button>
      <IconButton label="縮小" className="size-[15px] rounded-full border border-[#555] bg-white"><span className="h-0.5 w-2 bg-[#444]" /></IconButton>
      <input
        type="range"
        aria-label="ズーム"
        min={0}
        max={100}
        defaultValue={50}
        className="h-4 w-[100px] appearance-none bg-transparent [&::-webkit-slider-runnable-track]:h-px [&::-webkit-slider-runnable-track]:bg-[#777] [&::-webkit-slider-thumb]:-mt-[6px] [&::-webkit-slider-thumb]:h-3 [&::-webkit-slider-thumb]:w-[9px] [&::-webkit-slider-thumb]:appearance-none [&::-webkit-slider-thumb]:rounded-b-full [&::-webkit-slider-thumb]:border [&::-webkit-slider-thumb]:border-[#555] [&::-webkit-slider-thumb]:bg-white"
      />
      <IconButton label="拡大" className="size-[15px] rounded-full border border-[#555] bg-white">
        <svg width="9" height="9" viewBox="0 0 9 9"><path d="M4.500 0v9M0 4.500h9" stroke="#444" strokeWidth="2" /></svg>
      </IconButton>
      <svg width="12" height="12" viewBox="0 0 12 12" className="mt-1.5 ml-2 shrink-0" aria-hidden="true">
        <path d="M8 0h2v2H8zM4 4h2v2H4zM8 4h2v2H8zM0 8h2v2H0zM4 8h2v2H4zM8 8h2v2H8z" fill="#8b929b" />
      </svg>
    </footer>
  )
}

export default function App() {
  return (
    <div className="h-screen min-w-[1004px] bg-[#0a1a28] pt-0.5">
      <div className="flex h-full flex-col rounded-t-lg border-x-2 border-b border-[#15293a] bg-[linear-gradient(to_bottom,#35668c_0,#86a6bb_22px,#f0f4f6_50px,#c6d5e0_140px,#dbe5ec_225px,#3a6c90_226px,#2f658a_100%)] px-1.5 pb-[7px] font-['Noto_Sans','Noto_Sans_CJK_JP',sans-serif] [font-feature-settings:'palt']">
        <TitleBar />
        <MenuTabs />
        <Ribbon />
        <FormulaBar />
        <Worksheet />
        <SheetTabs />
        <StatusBar />
      </div>
    </div>
  )
}
